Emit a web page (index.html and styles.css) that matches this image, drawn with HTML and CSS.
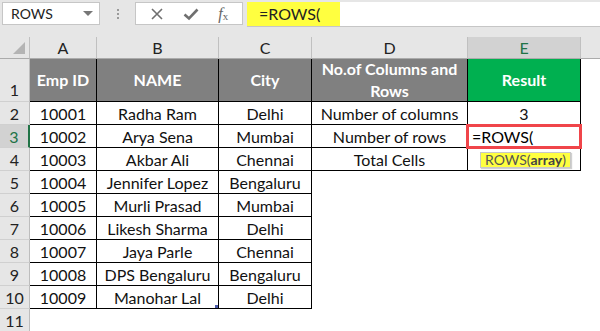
FILE: index.html
```html
<!DOCTYPE html>
<html lang="en">
<head>
    <meta charset="UTF-8">
    <title>ROWS function</title>
    <link rel="stylesheet" href="styles.css">
</head>
<body>

    <div class="formula-bar">
        <div class="name-box">
            <span>ROWS</span>
            <span class="caret"></span>
        </div>
        <div class="grip"><i></i><i></i><i></i></div>
        <div class="buttons">
            <svg width="14" height="14" viewBox="0 0 14 14"><path d="M2 2 L12 12 M12 2 L2 12" stroke="#6f6f6f" stroke-width="1.6"/></svg>
            <svg width="16" height="14" viewBox="0 0 16 14"><path d="M1.5 7.5 L6 11.5 L14.5 2.5" fill="none" stroke="#6f6f6f" stroke-width="2.6"/></svg>
            <span class="fx"><i>f</i><sub>x</sub></span>
        </div>
        <div class="formula-input">
            <span class="hl">=ROWS(</span>
        </div>
    </div>

    <div class="sheet">
        <div class="corner"><span></span></div>
        <div class="col">A</div>
        <div class="col">B</div>
        <div class="col">C</div>
        <div class="col">D</div>
        <div class="col sel">E</div>
        <div class="col blank"></div>

        <div class="row first">1</div>
        <div class="c head">Emp ID</div>
        <div class="c head">NAME</div>
        <div class="c head">City</div>
        <div class="c head">No.of Columns and Rows</div>
        <div class="c head green">Result</div>
        <div></div>

        <div class="row">2</div>
        <div class="c">10001</div>
        <div class="c">Radha Ram</div>
        <div class="c">Delhi</div>
        <div class="c">Number of columns</div>
        <div class="c">3</div>
        <div></div>

        <div class="row sel">3</div>
        <div class="c">10002</div>
        <div class="c">Arya Sena</div>
        <div class="c">Mumbai</div>
        <div class="c">Number of rows</div>
        <div class="c edit">=ROWS(
            <div class="tip">ROWS(<b>array</b>)</div>
        </div>
        <div></div>

        <div class="row">4</div>
        <div class="c">10003</div>
        <div class="c">Akbar Ali</div>
        <div class="c">Chennai</div>
        <div class="c">Total Cells</div>
        <div class="c"></div>
        <div></div>

        <div class="row">5</div>
        <div class="c">10004</div>
        <div class="c">Jennifer Lopez</div>
        <div class="c">Bengaluru</div>
        <div></div><div></div><div></div>

        <div class="row">6</div>
        <div class="c">10005</div>
        <div class="c">Murli Prasad</div>
        <div class="c">Mumbai</div>
        <div></div><div></div><div></div>

        <div class="row">7</div>
        <div class="c">10006</div>
        <div class="c">Likesh Sharma</div>
        <div class="c">Delhi</div>
        <div></div><div></div><div></div>

        <div class="row">8</div>
        <div class="c">10007</div>
        <div class="c">Jaya Parle</div>
        <div class="c">Chennai</div>
        <div></div><div></div><div></div>

        <div class="row">9</div>
        <div class="c">10008</div>
        <div class="c">DPS Bengaluru</div>
        <div class="c">Bengaluru</div>
        <div></div><div></div><div></div>

        <div class="row">10</div>
        <div class="c">10009</div>
        <div class="c handle">Manohar Lal</div>
        <div class="c">Delhi</div>
        <div></div><div></div><div></div>

        <div class="row">11</div>
        <div></div><div></div><div></div><div></div><div></div><div></div>
    </div>

</body>
</html>
```

FILE: styles.css
```css
body {
    margin: 0;
    font-family: Lato, "Open Sans", sans-serif;
    background: #fff;
    color: #111;
    overflow: hidden;
}

.formula-bar {
    display: flex;
    align-items: flex-start;
    height: 37px;
    padding: 2px 0 0 2px;
    box-sizing: border-box;
    background: #e6e6e6;
}

.name-box {
    display: flex;
    align-items: center;
    justify-content: space-between;
    width: 98px;
    height: 23px;
    padding: 0 6px 0 8px;
    box-sizing: border-box;
    background: #fff;
    border: 1px solid #c6c6c6;
    font-size: 14px;
    color: #222;
}

.caret {
    border-left: 5px solid transparent;
    border-right: 5px solid transparent;
    border-top: 5px solid #777;
}

.grip {
    display: flex;
    flex-direction: column;
    align-items: center;
    gap: 2px;
    width: 35px;
    padding-top: 7px;
}

.grip i {
    width: 2px;
    height: 2px;
    background: #9a9a9a;
}

.buttons {
    display: flex;
    align-items: center;
    justify-content: space-around;
    width: 108px;
    height: 23px;
    padding: 0 4px;
    box-sizing: border-box;
    background: #fff;
    border: 1px solid #c6c6c6;
}

.fx {
    font-family: "Liberation Serif", serif;
    font-size: 16px;
    color: #666;
}

.fx sub {
    font-size: 11px;
    vertical-align: -1px;
}

.formula-input {
    flex: 1;
    height: 24px;
    margin-left: 4px;
    background: #fff;
    border-bottom: 1px solid #c6c6c6;
}

.hl {
    display: inline-block;
    width: 93px;
    height: 24px;
    padding-left: 12px;
    box-sizing: border-box;
    background: #ffff40;
    font-size: 16px;
    line-height: 24px;
    color: #222;
}

.sheet {
    display: grid;
    grid-template-columns: 30px 67px 122px 93px 156px 113px 1fr;
    grid-template-rows: 22px 43px repeat(10, 23px);
    font-size: 16px;
}

.sheet > div {
    box-sizing: border-box;
}

.corner {
    position: relative;
    background: #e6e6e6;
    border-right: 1px solid #c0c0c0;
    border-bottom: 1px solid #ababab;
}

.corner span {
    position: absolute;
    right: 4px;
    bottom: 4px;
    border-left: 12px solid transparent;
    border-bottom: 12px solid #b4b4b4;
}

.col {
    display: flex;
    align-items: center;
    justify-content: center;
    background: #e6e6e6;
    border-right: 1px solid #c0c0c0;
    border-bottom: 1px solid #ababab;
    color: #222;
}

.col.sel {
    background: #d2d2d2;
    color: #217346;
}

.col.blank {
    border-right: none;
}

.row {
    display: flex;
    align-items: center;
    justify-content: center;
    background: #e6e6e6;
    border-right: 1px solid #bdbdbd;
    border-bottom: 1px solid #d0d0d0;
    color: #222;
}

.row.first {
    align-items: flex-end;
    padding-bottom: 2px;
}

.row.sel {
    background: #d2d2d2;
    color: #217346;
    border-right: 2px solid #217346;
}

.c {
    display: flex;
    align-items: center;
    justify-content: center;
    border-right: 1px solid #000;
    border-bottom: 1px solid #000;
    white-space: nowrap;
}

.c.head {
    background: #808080;
    color: #fff;
    font-weight: bold;
    text-align: center;
    white-space: normal;
    line-height: 22px;
    padding: 0 6px;
}

.c.head.green {
    background: #00b050;
}

.c.edit {
    position: relative;
    justify-content: flex-start;
    padding-left: 4px;
    color: #000;
}

.c.edit::after {
    content: "";
    position: absolute;
    left: -2px;
    top: -1px;
    right: -2px;
    bottom: -2px;
    border: 3px solid #f0454a;
}

.tip {
    position: absolute;
    left: 12px;
    top: 27px;
    z-index: 2;
    padding: 0 4px;
    background: #ffff40;
    border: 1px solid #c8c8c8;
    box-shadow: 1px 1px 1px #d0d0d0;
    font-size: 14px;
    line-height: 14px;
    color: #555;
}

.tip b {
    color: #444;
}

.c.handle {
    position: relative;
}

.c.handle::after {
    content: "";
    position: absolute;
    right: 0;
    bottom: 0;
    width: 3px;
    height: 3px;
    background: #4b5aa8;
}
```
